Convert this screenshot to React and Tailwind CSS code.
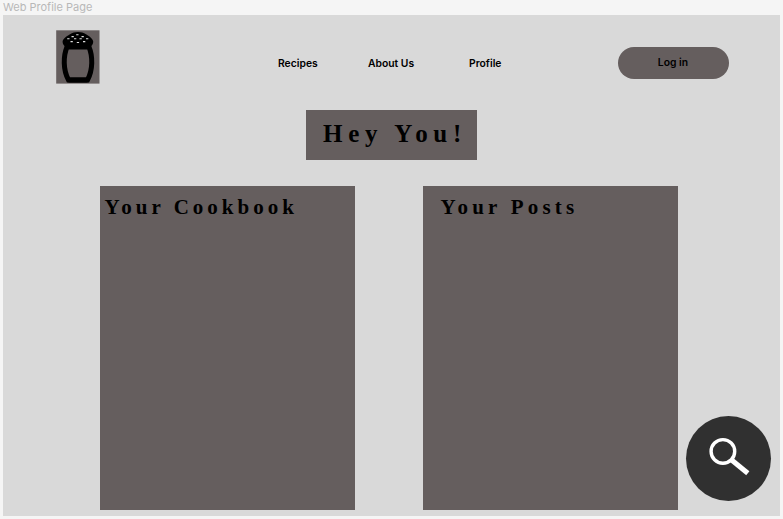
function ShakerLogo() {
  return (
    <svg viewBox="0 0 44 54" className="h-[54px] w-11" aria-hidden="true">
      <rect x="0.200" y="0.300" width="43.300" height="53.300" fill="#655e5e" />
      <path
        d="M11 17C7.200 26 7 40 12.500 50H31.500C37 40 36.800 26 33 17Z"
        fill="none"
        stroke="#000"
        strokeWidth="5"
      />
      <path d="M11 47.500H33L31.500 52.500H12.500Z" />
      <path d="M9.500 18C9 15.500 6.600 15 6.600 11.500C6.800 8.500 11 6 14 4.200C18.500 1.200 25.500 1.200 30 4.200C33 6 37 8.500 37.200 11.500C37.200 15 35 15.500 34.500 18Z" />
      <path
        d="M20.200 4.800h2.300M15.500 6.600h2.300M25.500 6.600h2.300M11.200 8.800h2.300M18 8.800h2.300M23.500 8.800h2.300M30 8.800h2.300M14.500 11.600h2.300M27 11.600h2.300M20.800 12.500h2.300"
        stroke="#ddd"
        strokeWidth="1.100"
      />
    </svg>
  );
}

function Panel({ children, className }) {
  return (
    <section className={`h-[324px] w-[255px] bg-[#655e5e] pt-2 ${className}`}>
      <h2 className="whitespace-nowrap font-['Liberation_Serif',serif] text-[21px] leading-[26px] font-bold">
        {children}
      </h2>
    </section>
  );
}

export default function App() {
  return (
    <div className="h-[519px] w-[783px] overflow-hidden bg-[#f5f5f5] pl-[3px] font-['Inter',sans-serif] text-black">
      <div className="h-[15px] text-[11px] leading-[15px] text-[#b8b8b8]">Web Profile Page</div>
      <main className="relative h-[501px] w-[777px] bg-[#d9d9d9]">
        <header className="flex h-[95px] items-start pt-[15px] pl-[53px] text-[10.350px] leading-4 font-semibold">
          <ShakerLogo />
          <nav className="flex w-[517.500px] pt-[25px] pl-[178px]">
            <a className="w-[90px]">Recipes</a>
            <a className="w-[101px]">About Us</a>
            <a>Profile</a>
          </nav>
          <button className="mt-[16.600px] flex h-8 w-[111px] items-center justify-center rounded-full bg-[#655e5e] pb-[2px]">
            Log in
          </button>
        </header>
        <h1 className="ml-[303px] h-[50px] w-[171px] bg-[#655e5e] pt-2 pl-[17px] font-['Liberation_Serif',serif] text-[25px] leading-[31px] font-bold tracking-[5.700px] whitespace-nowrap">
          Hey You!
        </h1>
        <div className="flex gap-[68px] pt-[26px] pl-[97px]">
          <Panel className="pl-[4.500px] tracking-[4px]">Your Cookbook</Panel>
          <Panel className="pl-[17.500px] tracking-[4.200px]">Your Posts</Panel>
        </div>
        <button
          aria-label="Search"
          className="absolute top-[401px] left-[682.700px] size-[85px] rounded-full bg-[#303030]"
        >
          <svg viewBox="0 0 85 85" className="size-full" fill="none" stroke="#fff">
            <circle cx="36.900" cy="35.400" r="11.800" strokeWidth="3.400" />
            <path d="M45 43.500L61.800 57.200" strokeWidth="5" />
          </svg>
        </button>
      </main>
    </div>
  );
}
